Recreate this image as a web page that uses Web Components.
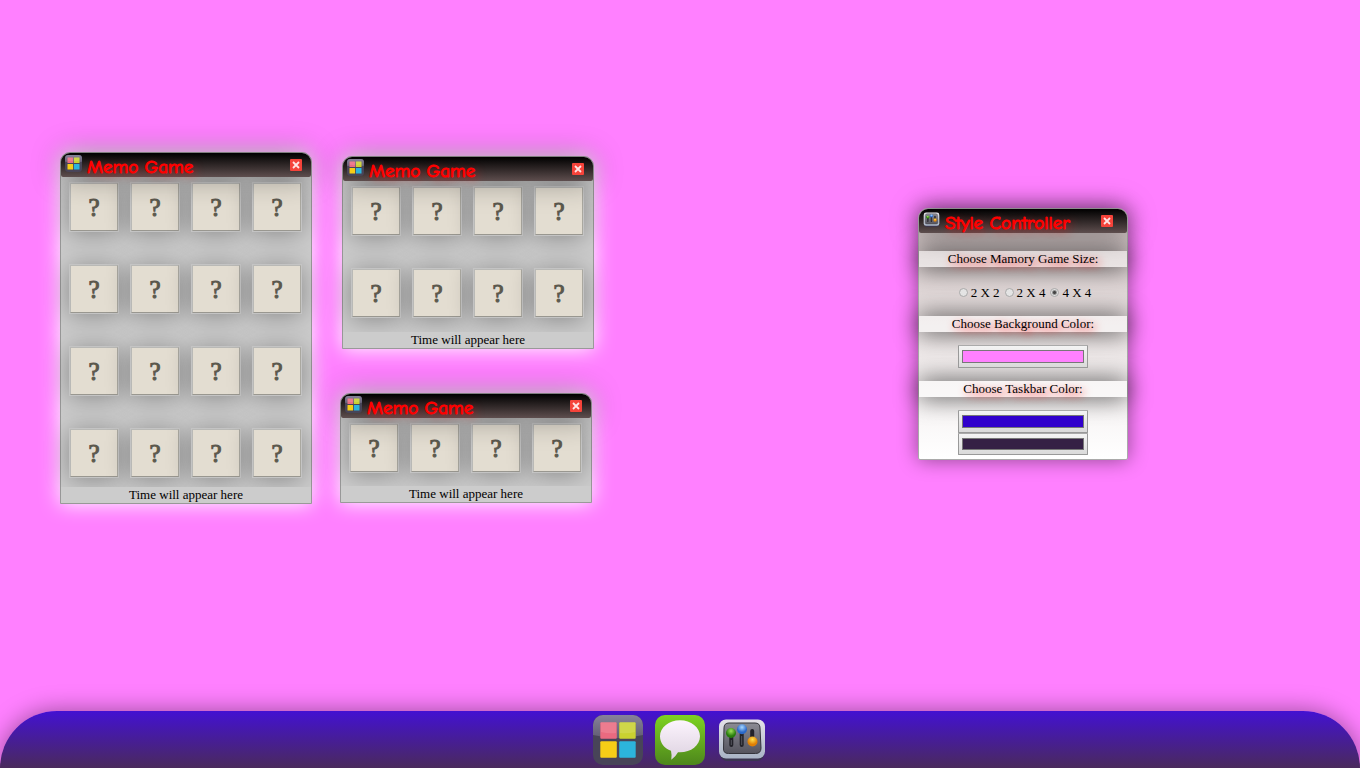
<!DOCTYPE html>
<html lang="en">
<head>
<meta charset="utf-8">
<title>Desktop</title>
<style>
  html, body { margin: 0; height: 100%; overflow: hidden; }
  body { font: 13px/16px "Liberation Serif", "Times New Roman", serif; color: #000; }
</style>
</head>
<body>
<web-desktop>
  <memo-game rows="4" style="left:60px;top:152px;width:252px;height:352px"></memo-game>
  <memo-game rows="2" style="left:342px;top:156px;width:252px;height:193px"></memo-game>
  <memo-game rows="1" style="left:340px;top:393px;width:252px;height:110px"></memo-game>
  <style-controller style="left:918px;top:208px;width:210px;height:252px"></style-controller>
  <task-bar slot="taskbar"></task-bar>
</web-desktop>

<template id="desktop-tpl">
  <style>
    :host { display: flex; flex-direction: column; height: 100vh; background: #ff80ff; overflow: hidden; }
    main { flex: 1; position: relative; }
  </style>
  <main><slot></slot></main>
  <slot name="taskbar"></slot>
</template>

<template id="icon-tpl">
  <style>
    :host { display: block; width: 50px; height: 50px; }
    svg { display: block; width: 100%; height: 100%; }
  </style>
</template>

<template id="window-tpl">
  <style>
    :host { display: flex; flex-direction: column; box-sizing: border-box; height: 100%;
      border: 1px solid var(--edge, #999); border-radius: 10px 10px var(--foot-radius, 0) var(--foot-radius, 0);
      background: var(--fill, #ccc); box-shadow: var(--glow, none); }
    header { position: relative; z-index: 1; display: flex; align-items: flex-start; height: 24px; box-sizing: border-box;
      padding: 2px var(--close-gap, 9px) 0 4px; gap: 5px;
      border-radius: 9px 9px 2px 2px; background: linear-gradient(#000, #5e4e4e); box-shadow: 0 0 30px rgba(0,0,0,.4); }
    app-icon { width: 17px; height: 17px; flex: none; }
    h2 { flex: 1; margin: 0; font: 400 19px/24px "Comic Sans MS", "Comic Neue", cursive; color: #f00; -webkit-text-stroke: 1px #f00; text-shadow: 3px 3px 8px rgba(255,0,0,.7); white-space: nowrap; }
    button { display: block; width: 12px; height: 12px; margin: 4px 0 0; padding: 0; border: 0; border-radius: 1px; background: #f5433a; }
    button svg { display: block; width: 12px; height: 12px; }
    section { flex: 1; display: flex; flex-direction: column; }
  </style>
  <header>
    <app-icon></app-icon>
    <h2></h2>
    <button type="button" aria-label="Close"><svg viewBox="0 0 12 12"><path d="M3 3l6 6M9 3L3 9" stroke="#ffe4e4" stroke-width="1.800"/></svg></button>
  </header>
  <section><slot></slot></section>
</template>

<template id="card-tpl">
  <style>
    :host { display: block; height: 50px; box-shadow: 0 2px 24px rgba(0,0,0,.33); }
    button { display: block; box-sizing: border-box; width: 100%; height: 100%; padding: 2px 0 0;
      border: 2px solid #b9b9b6; border-right-color: #aaa8a0; border-bottom-color: #999790; outline: 1px solid #c4c4c4; outline-offset: -1px;
      background: #e3ddd1; color: #5b584d; -webkit-text-stroke: 1px #5b584d;
      font: 400 25px/44px "Liberation Serif", serif; text-align: center; }
  </style>
  <button type="button">?</button>
</template>

<template id="memo-tpl">
  <style>
    :host { position: absolute; display: block; --glow: 0 0 20px #fff; }
    .cards { flex: 1; display: grid; grid-template-columns: repeat(4, 50px); align-content: start; gap: 32px 11px; padding: 5px 8px 0; }
    footer { position: relative; height: 16px; background: #ccc; text-align: center; }
  </style>
  <app-window name="Memo Game" icon="memo">
    <div class="cards"></div>
    <footer>Time will appear here</footer>
  </app-window>
</template>

<template id="style-tpl">
  <style>
    :host { position: absolute; display: block; --edge: #aaa; --foot-radius: 2px; --close-gap: 14px;
      --fill: linear-gradient(#c8baba, #e9e2e2 45%, #fff); --glow: 0 0 20px rgba(0,0,0,.45); }
    form { display: flex; flex-direction: column; padding-top: 18px; }
    .band { display: block; height: 16px; background: rgba(255,255,255,.45); box-shadow: 0 0 25px rgba(0,0,0,.75);
      text-align: center; text-shadow: 3px 3px 8px #f00; }
    .field { position: relative; display: flex; flex-direction: column; align-items: center; height: 36px; padding-top: 13px; }
    .sizes { flex-direction: row; align-items: flex-start; justify-content: center; height: 31px; padding: 18px 0 0 4px; gap: 5px; }
    .sizes label { display: flex; gap: 3px; white-space: nowrap; }
    input[type=radio] { appearance: none; box-sizing: border-box; width: 9px; height: 9px; margin: 3px 0 0; border: 1px solid #aaa; border-radius: 50%; background: #e4e4e4; }
    input[type=radio]:checked { background: radial-gradient(circle, #444 0 1px, #e0e0e0 3px); }
    input[type=color] { appearance: none; box-sizing: border-box; display: block; flex: none; width: 130px; height: 23px; padding: 4px 3px;
      border: 1px solid #999; border-top-color: #aaa; border-radius: 1px; background: linear-gradient(#f4f4f4, #dadada); }
    input::-webkit-color-swatch-wrapper { padding: 0; }
    input::-webkit-color-swatch { border: 1px solid #777; border-radius: 0; }
    .last { height: 46px; }
    input.second { height: 22px; }
  </style>
  <app-window name="Style Controller" icon="style">
    <form>
      <span class="band" id="size">Choose Mamory Game Size:</span>
      <div class="field sizes" role="radiogroup" aria-labelledby="size">
        <label><input type="radio" name="size">2 X 2</label>
        <label><input type="radio" name="size">2 X 4</label>
        <label><input type="radio" name="size" checked>4 X 4</label>
      </div>
      <label class="band" for="bg">Choose Background Color:</label>
      <div class="field"><input type="color" id="bg" value="#ff80ff"></div>
      <label class="band" for="bar">Choose Taskbar Color:</label>
      <div class="field last">
        <input type="color" id="bar" value="#3000cc">
        <input class="second" type="color" aria-label="Second taskbar color" value="#352045">
      </div>
    </form>
  </app-window>
</template>

<template id="bar-tpl">
  <style>
    :host { position: relative; display: flex; justify-content: center; gap: 12px; height: 57px; box-sizing: border-box; padding-top: 4px;
      border-radius: 57px 57px 0 0; background: linear-gradient(#4311d2, #4a2a5c); box-shadow: 0 0 25px rgba(0,0,0,.4); }
    button { display: block; width: 50px; height: 50px; padding: 0; border: 0; background: none; }
  </style>
  <button type="button" aria-label="Memo Game"><app-icon icon="memo"></app-icon></button>
  <button type="button" aria-label="Chat"><app-icon icon="chat"></app-icon></button>
  <button type="button" aria-label="Style Controller"><app-icon icon="style"></app-icon></button>
</template>

<script>
  const ICONS = {
    memo: `<svg viewBox="0 0 50 50"><defs><linearGradient id="g" x2="0" y2="1"><stop stop-color="#87829a"/><stop offset="1" stop-color="#625d73"/></linearGradient></defs>
      <rect width="50" height="50" rx="10" fill="#484458"/><path d="M0 20V10A10 10 0 0 1 10 0H40A10 10 0 0 1 50 10V20Q25 26 0 20z" fill="url(#g)"/>
      <rect x="7.300" y="7.300" width="16.500" height="16.500" rx="1" fill="#ea6a80"/><rect x="26.200" y="7.300" width="16.500" height="16.500" rx="1" fill="#c9d130"/>
      <path d="M8 7.300H23V18Q16 19 8 17zM27 7.300H42V17Q35 19 27 18z" fill="#fff" opacity=".12"/>
      <rect x="7.300" y="26.200" width="16.500" height="16.500" rx="1" fill="#f6cd17"/><rect x="26.200" y="26.200" width="16.500" height="16.500" rx="1" fill="#2cb4dc"/></svg>`,
    chat: `<svg viewBox="0 0 50 50"><defs><linearGradient id="g" x2="0" y2="1"><stop stop-color="#7ed321"/><stop offset="1" stop-color="#4d861c"/></linearGradient>
      <linearGradient id="b" x2="0" y2="1"><stop stop-color="#fcf4fd"/><stop offset="1" stop-color="#ddd2e0"/></linearGradient></defs>
      <rect width="50" height="50" rx="10" fill="url(#g)"/><path d="M25 5.200C36 5.200 45 12.200 45 21.200S36 37.300 25 37.300H23Q20.500 42 16.300 44.700Q17 40 16 35.800C9.500 33.300 5 28 5 21.200C5 12.200 14 5.200 25 5.200z" fill="url(#b)"/></svg>`,
    style: `<svg viewBox="0 0 50 50"><defs>
      <linearGradient id="g" x2="0" y2="1"><stop stop-color="#e4e2e8"/><stop offset="1" stop-color="#a9b4c6"/></linearGradient>
      <linearGradient id="i" x2="0" y2="1"><stop stop-color="#8b8b94"/><stop offset="1" stop-color="#55545e"/></linearGradient>
      <radialGradient id="k" cy=".3"><stop stop-color="#a0e35c"/><stop offset="1" stop-color="#277c0c"/></radialGradient>
      <radialGradient id="l" cy=".3"><stop stop-color="#a9d8ff"/><stop offset="1" stop-color="#2968c9"/></radialGradient>
      <radialGradient id="o" cy=".3"><stop stop-color="#ffe14d"/><stop offset="1" stop-color="#e07f04"/></radialGradient></defs>
      <rect x="3" y="7" width="44" height="39" rx="7" fill="#3a3550"/><rect x="2" y="4.500" width="46" height="39" rx="7" fill="url(#g)"/>
      <path d="M12 8H38Q43 8 43 13L44 33Q44 38.500 38.500 38.500H11.500Q6 38.500 6.500 33L7 13Q7 8 12 8z" fill="url(#i)" stroke="#34343c"/>
      <g stroke="#222229" stroke-width="4" stroke-linecap="round"><path d="M14.300 20V30M24.700 16V30M35.200 16V26"/></g>
      <g stroke="#55555e" stroke-width="1"><path d="M14.300 25V30M24.700 21V30"/></g>
      <circle cx="14" cy="18" r="5" fill="url(#k)"/><circle cx="25" cy="14.300" r="5" fill="url(#l)"/><circle cx="35.500" cy="26.500" r="5" fill="url(#o)"/></svg>`
  };

  class Base extends HTMLElement {
    render(id) {
      this.attachShadow({ mode: "open" }).append(document.getElementById(id).content.cloneNode(true));
    }
  }
  class AppIcon extends Base {
    static observedAttributes = ["icon"];
    connectedCallback() { if (!this.shadowRoot) this.render("icon-tpl"); this.draw(); }
    attributeChangedCallback() { this.draw(); }
    draw() {
      const name = this.getAttribute("icon");
      if (!this.shadowRoot || !name) return;
      this.shadowRoot.querySelector("svg")?.remove();
      this.shadowRoot.append(document.createRange().createContextualFragment(ICONS[name]));
    }
  }
  class AppWindow extends Base {
    connectedCallback() {
      this.render("window-tpl");
      this.shadowRoot.querySelector("h2").textContent = this.getAttribute("name");
      this.shadowRoot.querySelector("app-icon").setAttribute("icon", this.getAttribute("icon"));
    }
  }
  class MemoCard extends Base { connectedCallback() { this.render("card-tpl"); } }
  class MemoGame extends Base {
    connectedCallback() {
      this.render("memo-tpl");
      const cards = this.shadowRoot.querySelector(".cards");
      for (let i = 0; i < this.getAttribute("rows") * 4; i++) cards.append(document.createElement("memo-card"));
    }
  }
  class StyleController extends Base { connectedCallback() { this.render("style-tpl"); } }
  class TaskBar extends Base { connectedCallback() { this.render("bar-tpl"); } }
  class WebDesktop extends Base { connectedCallback() { this.render("desktop-tpl"); } }

  customElements.define("app-icon", AppIcon);
  customElements.define("app-window", AppWindow);
  customElements.define("memo-card", MemoCard);
  customElements.define("memo-game", MemoGame);
  customElements.define("style-controller", StyleController);
  customElements.define("task-bar", TaskBar);
  customElements.define("web-desktop", WebDesktop);
</script>
</body>
</html>
